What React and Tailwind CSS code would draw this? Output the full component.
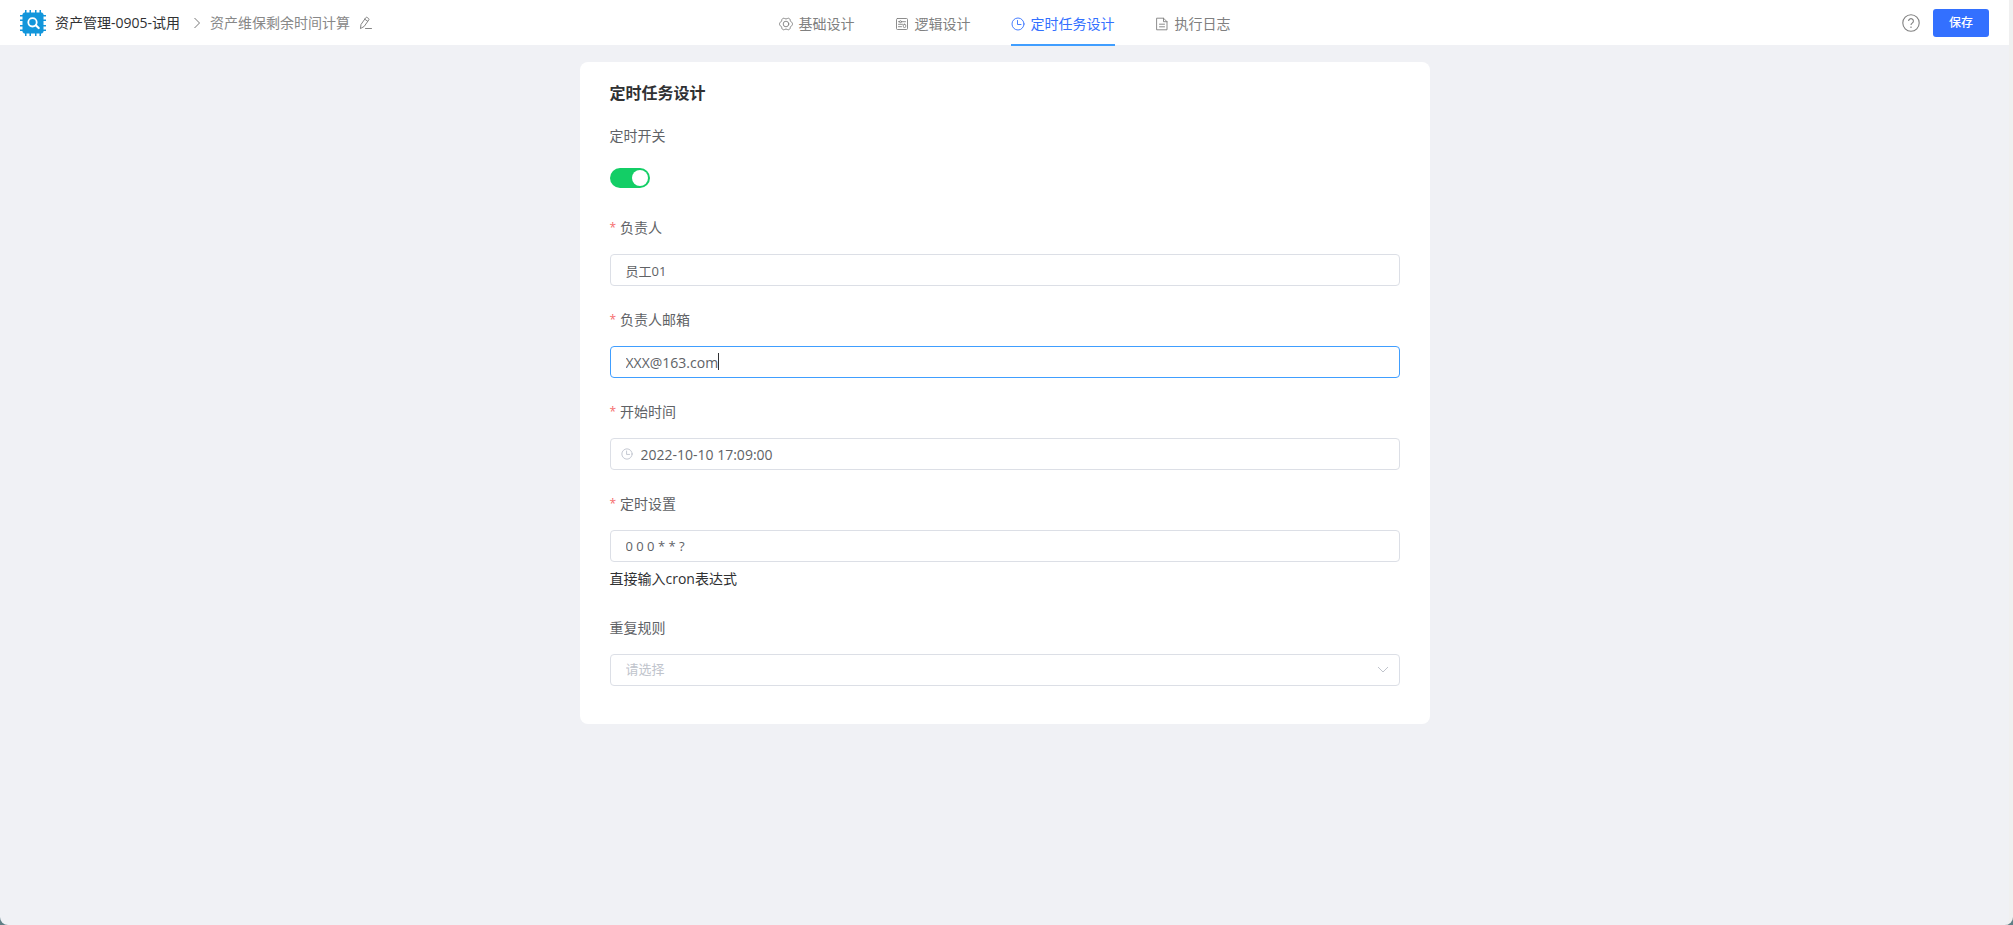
import React, { useState } from "react";

function LogoIcon() {
  return (
    <svg viewBox="0 0 26 26" className="h-[26px] w-[26px] shrink-0" aria-hidden="true">
      <g fill="#1296db">
        <path d="M4 2.500h18l1.500 1.500v18l-1.500 1.500H4L2.500 22V4z" />
        <path d="M5 0h1.500V3H5zM9.500 0H11V3H9.500zM15 0h1.500V3H15zM19.500 0H21V3h-1.500zM5 23h1.500v3H5zM9.500 23H11v3H9.500zM15 23h1.500v3H15zM19.500 23H21v3h-1.500z" />
        <path d="M0 5H3v1.500H0zM0 9.500H3V11H0zM0 15H3v1.500H0zM0 19.500H3V21H0zM23 5h3v1.500H23zM23 9.500h3V11H23zM23 15h3v1.500H23zM23 19.500h3V21H23z" />
      </g>
      <circle cx="12.500" cy="12.300" r="4.200" fill="none" stroke="#fff" strokeWidth="1.800" />
      <path d="M15.800 15.300l2.900 2.700" stroke="#fff" strokeWidth="2.200" strokeLinecap="round" />
    </svg>
  );
}

function Icon({ children, className = "h-[14px] w-[14px]" }) {
  return (
    <svg
      viewBox="0 0 14 14"
      className={`shrink-0 ${className}`}
      fill="none"
      stroke="currentColor"
      strokeWidth="0.900"
      strokeLinecap="round"
      strokeLinejoin="round"
      aria-hidden="true"
    >
      {children}
    </svg>
  );
}

const EditIcon = () => (
  <Icon>
    <path d="M2.200 8.200L6.800 1.700a1 1 0 0 1 1.400-.2l1.400 1a1 1 0 0 1 .2 1.400L5.200 10.400l-3.400 2zM5.800 3.200l2.800 2M6.500 12.500h6" />
  </Icon>
);
const GearIcon = () => (
  <Icon>
    <path d="M4.200 1.300Q5 .9 5.600 1.500Q7 2.500 8.400 1.500Q9 .9 9.800 1.300L10.800 2Q11.300 2.500 11.200 3.200Q11.300 4.700 12.600 5.200Q13.400 5.500 13.400 6.300V7.700Q13.400 8.500 12.600 8.800Q11.300 9.300 11.200 10.800Q11.300 11.500 10.800 12L9.800 12.700Q9 13.100 8.400 12.500Q7 11.500 5.600 12.500Q5 13.100 4.200 12.700L3.200 12Q2.700 11.500 2.800 10.800Q2.700 9.300 1.400 8.800Q.6 8.500 .6 7.700V6.300Q.6 5.500 1.400 5.200Q2.700 4.700 2.800 3.200Q2.700 2.500 3.200 2z" />
    <circle cx="7" cy="7" r="2.800" />
  </Icon>
);
const LogicIcon = () => (
  <Icon>
    <rect x="1.500" y="1.500" width="11" height="11" rx="1" />
    <path d="M3.500 4.700h1M6.500 4.700h4M3.500 7.300h4M3.500 9.700h3" />
    <circle cx="5.500" cy="4.700" r="1" />
    <rect x="8.300" y="7.300" width="2.400" height="3.200" rx="1" />
  </Icon>
);
const ClockIcon = ({ className }) => (
  <Icon className={className}>
    <circle cx="7" cy="7" r="6" />
    <path d="M6.500 3.500v4h3.500" />
  </Icon>
);
const LogIcon = () => (
  <Icon>
    <path d="M2 1.200h6.500L12 4.700v8.100H2zM8.500 1.200v3.500H12M4.500 7.200h5M4.500 9.800h5" />
  </Icon>
);

const tabs = [
  { label: "基础设计", icon: GearIcon },
  { label: "逻辑设计", icon: LogicIcon },
  { label: "定时任务设计", icon: ClockIcon },
  { label: "执行日志", icon: LogIcon },
];

function Header({ active, onSelect }) {
  return (
    <header className="grid h-[45px] grid-cols-[1fr_auto_1fr] items-center bg-white px-5 text-sm">
      <nav className="flex items-center" aria-label="路径">
        <LogoIcon />
        <a href="#app" className="ml-[9px] text-[#303133]">资产管理-0905-试用</a>
        <svg viewBox="0 0 8 12" className="ml-[13px] h-3 w-2" fill="none" stroke="#777" aria-hidden="true">
          <path d="M1.500 1L6.500 6l-5 5" />
        </svg>
        <span className="ml-[9px] text-[#888]">资产维保剩余时间计算</span>
        <button type="button" aria-label="编辑名称" className="ml-[9px] text-[#777]">
          <EditIcon />
        </button>
      </nav>
      <div className="flex h-[46px] gap-10 self-start" role="tablist">
        {tabs.map(({ label, icon: TabIcon }, i) => (
          <button
            key={label}
            type="button"
            role="tab"
            aria-selected={i === active}
            onClick={() => onSelect(i)}
            className={`flex items-center gap-[6px] border-b-2 pt-1 ${
              i === active ? "border-[#409eff] text-[#3370ff]" : "border-transparent text-[#808080]"
            }`}
          >
            <TabIcon />
            {label}
          </button>
        ))}
      </div>
      <div className="flex items-center justify-end gap-[13px]">
        <button type="button" aria-label="帮助" className="text-[#808080]">
          <svg viewBox="0 0 18 18" className="h-[18px] w-[18px]" fill="none" stroke="currentColor" strokeWidth="1.100" aria-hidden="true">
            <circle cx="9" cy="9" r="8.200" />
            <path d="M6.600 7a2.400 2.400 0 1 1 3.600 2.100c-.8.500-1.200.9-1.200 1.900M9 12.500v1.400" />
          </svg>
        </button>
        <button type="button" className="h-7 w-14 rounded-[3px] bg-[#3370ff] text-xs font-medium text-white">
          保存
        </button>
      </div>
    </header>
  );
}

function Field({ id, label, required, children }) {
  return (
    <div className="mb-[14px]">
      <label htmlFor={id} className="mb-[6px] flex h-10 items-center text-sm text-[#606266]">
        {required && <span className="mr-1 text-xs text-[#f56c6c]">*</span>}
        {label}
      </label>
      {children}
    </div>
  );
}

const inputClass = "block h-8 w-full rounded border bg-white text-[#606266] outline-none";

export default function App() {
  const [active, setActive] = useState(2);
  const [enabled, setEnabled] = useState(true);
  return (
    <div className="bg-[#5f7f86]">
      <div className="min-h-screen rounded-b-lg border-r-4 border-[#f0f0f0] bg-[#f0f1f5] font-['Open_Sans','Noto_Sans_CJK_SC',sans-serif]">
        <Header active={active} onSelect={setActive} />
        <main className="mx-auto mt-[17px] w-full max-w-[850px] rounded-lg bg-white px-[30px] pb-6 pt-[18px]">
          <h1 className="text-base font-bold leading-[26px] text-[#303133]">定时任务设计</h1>
          <form className="pt-[10px]" onSubmit={(e) => e.preventDefault()}>
            <Field id="enabled" label="定时开关">
              <div className="flex h-8 items-center">
                <label className="relative block h-5 w-10 cursor-pointer">
                  <input
                    id="enabled"
                    type="checkbox"
                    role="switch"
                    checked={enabled}
                    onChange={(e) => setEnabled(e.target.checked)}
                    className="peer block h-5 w-10 appearance-none rounded-full bg-[#dcdfe6] checked:bg-[#13ce66]"
                  />
                  <span className="absolute left-0.5 top-0.5 h-4 w-4 rounded-full bg-white peer-checked:left-[22px]" />
                </label>
              </div>
            </Field>
            <Field id="owner" label="负责人" required>
              <input id="owner" type="text" defaultValue="员工01" className={`${inputClass} border-[#dcdfe6] px-[15px] text-[13px]`} />
            </Field>
            <Field id="email" label="负责人邮箱" required>
              <div className="relative">
                <input id="email" type="text" defaultValue="XXX@163.com" className={`${inputClass} border-[#409eff] px-[15px] text-sm`} />
                <span className="absolute left-[108px] top-[7px] h-[17px] w-px bg-[#303133]" />
              </div>
            </Field>
            <Field id="start" label="开始时间" required>
              <div className="relative">
                <input id="start" type="text" defaultValue="2022-10-10 17:09:00" className={`${inputClass} border-[#dcdfe6] pl-[30px] pr-[15px] text-sm`} />
                <span className="absolute left-[11px] top-[10px] text-[#b4b9c4]">
                  <ClockIcon className="h-3 w-3" />
                </span>
              </div>
            </Field>
            <Field id="cron" label="定时设置" required>
              <input id="cron" type="text" defaultValue="0 0 0 * * ?" className={`${inputClass} border-[#dcdfe6] px-[15px] text-[13px]`} />
              <p className="mb-[18px] mt-[6px] text-sm leading-[22px] text-[#303133]">直接输入cron表达式</p>
            </Field>
            <Field id="repeat" label="重复规则">
              <div className="relative">
                <select id="repeat" defaultValue="" className={`${inputClass} appearance-none border-[#dcdfe6] px-[15px] text-[13px] text-[#c0c4cc]`}>
                  <option value="">请选择</option>
                  <option value="day">每天</option>
                </select>
                <svg viewBox="0 0 12 8" className="pointer-events-none absolute right-[11px] top-3 h-2 w-3" fill="none" stroke="#c0c4cc" aria-hidden="true">
                  <path d="M1 1l5 5 5-5" />
                </svg>
              </div>
            </Field>
          </form>
        </main>
      </div>
    </div>
  );
}
